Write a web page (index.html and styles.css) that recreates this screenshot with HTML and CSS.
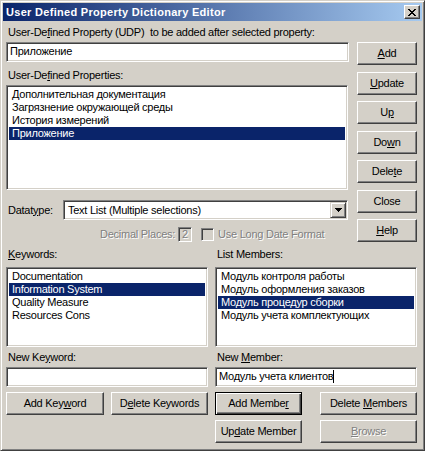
FILE: index.html
```html
<!DOCTYPE html>
<html lang="en">
<head>
    <meta charset="UTF-8">
    <title>User Defined Property Dictionary Editor</title>
    <link rel="stylesheet" href="styles.css">
</head>
<body>
    <div class="window">
        <div class="titlebar">
            <span class="title">User Defined Property Dictionary Editor</span>
            <span class="close-btn">
                <svg width="8" height="7" viewBox="0 0 8 7" shape-rendering="crispEdges">
                    <path d="M0 0h2v1H0zM6 0h2v1H6zM1 1h2v1H1zM5 1h2v1H5zM2 2h4v1H2zM3 3h2v1H3zM2 4h4v1H2zM1 5h2v1H1zM5 5h2v1H5zM0 6h2v1H0zM6 6h2v1H6z" fill="#000"/>
                </svg>
            </span>
        </div>

        <div class="client">
            <div class="upper">
                <div class="main">
                    <div class="label">User-De<u>f</u>ined Property (UDP)&nbsp; to be added after selected property:</div>
                    <div class="edit udp-edit">Приложение</div>

                    <div class="label props-label">User-De<u>f</u>ined Properties:</div>
                    <div class="listbox props-list">
                        <div class="item">Дополнительная документация</div>
                        <div class="item">Загрязнение окружающей среды</div>
                        <div class="item">История измерений</div>
                        <div class="item selected">Приложение</div>
                    </div>

                    <div class="type-row">
                        <span class="label">Datat<u>y</u>pe:</span>
                        <div class="combo">
                            <span class="combo-text">Text List (Multiple selections)</span>
                            <span class="combo-btn">
                                <svg width="7" height="4" viewBox="0 0 7 4" shape-rendering="crispEdges">
                                    <path d="M0 0h7v1H0zM1 1h5v1H1zM2 2h3v1H2zM3 3h1v1H3z" fill="#000"/>
                                </svg>
                            </span>
                        </div>
                    </div>

                    <div class="option-row">
                        <span class="disabled-text">Decimal Places:</span>
                        <span class="small-edit disabled-text">2</span>
                        <span class="checkbox"></span>
                        <span class="disabled-text">Use Long Date Format</span>
                    </div>
                </div>

                <div class="side">
                    <button class="btn"><u>A</u>dd</button>
                    <button class="btn"><u>U</u>pdate</button>
                    <button class="btn">U<u>p</u></button>
                    <button class="btn">Do<u>w</u>n</button>
                    <button class="btn">Dele<u>t</u>e</button>
                    <button class="btn">Close</button>
                    <button class="btn"><u>H</u>elp</button>
                </div>
            </div>

            <div class="lower">
                <div class="col">
                    <div class="label"><u>K</u>eywords:</div>
                    <div class="listbox small-list">
                        <div class="item">Documentation</div>
                        <div class="item selected">Information System</div>
                        <div class="item">Quality Measure</div>
                        <div class="item">Resources Cons</div>
                    </div>
                    <div class="label new-label">New Ke<u>y</u>word:</div>
                    <div class="edit"></div>
                    <div class="btn-row">
                        <button class="btn wide">Add Key<u>w</u>ord</button>
                        <button class="btn wide">D<u>e</u>lete Keywords</button>
                    </div>
                </div>

                <div class="col">
                    <div class="label">List Members:</div>
                    <div class="listbox small-list">
                        <div class="item">Модуль контроля работы</div>
                        <div class="item">Модуль оформления заказов</div>
                        <div class="item selected">Модуль процедур сборки</div>
                        <div class="item">Модуль учета комплектующих</div>
                    </div>
                    <div class="label new-label">New <u>M</u>ember:</div>
                    <div class="edit">Модуль учета клиентов<span class="caret"></span></div>
                    <div class="btn-row member-row">
                        <button class="btn member default">Add Membe<u>r</u></button>
                        <button class="btn wide">Delete <u>M</u>embers</button>
                    </div>
                    <div class="btn-row member-row">
                        <button class="btn member">Up<u>d</u>ate Member</button>
                        <button class="btn wide" disabled><u>B</u>rowse</button>
                    </div>
                </div>
            </div>
        </div>
    </div>
</body>
</html>
```

FILE: styles.css
```css
* {
    box-sizing: border-box;
}
body {
    margin: 0;
    font-family: "Liberation Sans", Arial, sans-serif;
    font-size: 11px;
    line-height: 13px;
    letter-spacing: -0.25px;
    color: #000;
    background: #d4d0c8;
}
u {
    text-decoration-thickness: 1px;
    text-underline-offset: 1px;
}
.window {
    width: 425px;
    height: 451px;
    background: #d4d0c8;
    border: 1px solid;
    border-color: #d4d0c8 #404040 #404040 #d4d0c8;
    box-shadow: inset 1px 1px #fff, inset -1px -1px #808080;
    padding: 2px;
}
.titlebar {
    height: 18px;
    display: flex;
    align-items: center;
    justify-content: space-between;
    padding: 0 2px 0 3px;
    background: linear-gradient(to right, #0a246a, #a6caf0);
    color: #fff;
}
.title {
    font-weight: bold;
    letter-spacing: 0.3px;
}
.close-btn {
    width: 16px;
    height: 14px;
    display: flex;
    align-items: center;
    justify-content: center;
    background: #d4d0c8;
    border: 1px solid;
    border-color: #fff #404040 #404040 #fff;
    box-shadow: inset -1px -1px #808080;
}
.client {
    margin-top: 1px;
    padding: 4px 5px 0 3px;
}
.upper {
    display: flex;
    justify-content: space-between;
}
.main {
    width: 343px;
}
.label {
    padding-left: 2px;
    height: 13px;
    white-space: nowrap;
}
.edit {
    height: 20px;
    margin-top: 3px;
    padding: 2px 3px;
    background: #fff;
    border: 1px solid;
    border-color: #808080 #fff #fff #808080;
    box-shadow: inset 1px 1px #404040, inset -1px -1px #d4d0c8;
    white-space: nowrap;
}
.caret {
    display: inline-block;
    width: 1px;
    height: 13px;
    background: #000;
    vertical-align: top;
}
.props-label {
    margin-top: 7px;
}
.listbox {
    background: #fff;
    border: 1px solid;
    border-color: #808080 #fff #fff #808080;
    box-shadow: inset 1px 1px #404040, inset -1px -1px #d4d0c8;
    padding: 2px;
}
.props-list {
    width: 342px;
    height: 105px;
    margin-top: 3px;
}
.item {
    height: 13px;
    padding-left: 3px;
    white-space: nowrap;
}
.item.selected {
    background: #0a246a;
    color: #fff;
}
.type-row {
    display: flex;
    align-items: center;
    margin-top: 10px;
}
.type-row .label {
    width: 57px;
}
.combo {
    width: 285px;
    height: 20px;
    display: flex;
    justify-content: space-between;
    background: #fff;
    border: 1px solid;
    border-color: #808080 #fff #fff #808080;
    box-shadow: inset 1px 1px #404040, inset -1px -1px #d4d0c8;
    padding: 1px;
}
.combo-text {
    padding: 2px 0 0 3px;
}
.combo-btn {
    width: 16px;
    display: flex;
    align-items: center;
    justify-content: center;
    background: #d4d0c8;
    border: 1px solid;
    border-color: #d4d0c8 #404040 #404040 #d4d0c8;
    box-shadow: inset 1px 1px #fff, inset -1px -1px #808080;
}
.option-row {
    display: flex;
    align-items: center;
    height: 16px;
    margin-top: 6px;
    padding-left: 94px;
}
.disabled-text {
    color: #808080;
    text-shadow: 1px 1px #fff;
}
.small-edit {
    width: 14px;
    height: 15px;
    margin-left: 3px;
    padding-left: 3px;
    border: 1px solid;
    border-color: #808080 #fff #fff #808080;
    box-shadow: inset 1px 1px #404040, inset -1px -1px #d4d0c8;
}
.checkbox {
    width: 13px;
    height: 13px;
    margin: 0 4px 0 9px;
    border: 1px solid;
    border-color: #808080 #fff #fff #808080;
    box-shadow: inset 1px 1px #404040, inset -1px -1px #d4d0c8;
}
.side {
    width: 60px;
    display: flex;
    flex-direction: column;
    gap: 6.5px;
    margin-top: 16px;
}
.btn {
    height: 23px;
    padding: 0;
    font: inherit;
    letter-spacing: inherit;
    color: #000;
    background: #d4d0c8;
    border: 1px solid;
    border-color: #fff #404040 #404040 #fff;
    box-shadow: inset -1px -1px #808080;
    white-space: nowrap;
}
.btn:disabled {
    color: #808080;
    text-shadow: 1px 1px #fff;
}
.btn.default {
    border-color: #000;
    box-shadow: inset 1px 1px #fff, inset -1px -1px #404040, inset -2px -2px #808080;
}
.lower {
    display: grid;
    grid-template-columns: 202px 202px;
    column-gap: 7px;
    margin-top: 6px;
}
.small-list {
    height: 80px;
    margin-top: 6px;
}
.new-label {
    margin-top: 4px;
}
.btn-row {
    display: flex;
    justify-content: space-between;
    margin-top: 5px;
}
.btn.wide {
    width: 97px;
}
.col:first-child .btn-row .btn:first-child {
    width: 98px;
}
.btn.member {
    width: 87px;
}
```
